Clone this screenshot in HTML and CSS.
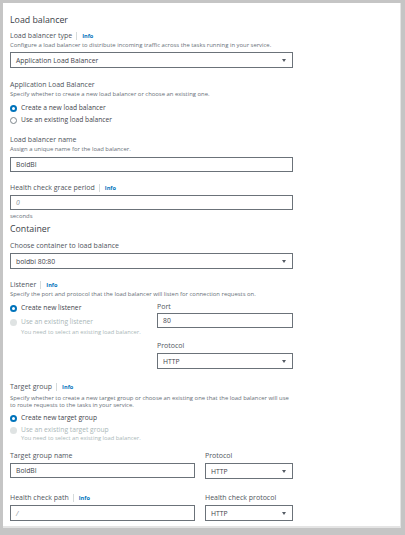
FILE: index.html
```html
<!DOCTYPE html>
<html lang="en">

<head>
    <meta charset="UTF-8">
    <meta name="viewport" content="width=device-width, initial-scale=1.0">
    <title>Load balancing</title>
    <link rel="stylesheet" href="styles.css">
</head>

<body>

    <div class="panel">
        <h2 class="title">Load balancer</h2>

        <div class="field first">
            <div class="label">Load balancer type <span class="info">Info</span></div>
            <div class="desc">Configure a load balancer to distribute incoming traffic across the tasks running in your service.</div>
            <div class="select">Application Load Balancer<span class="caret"></span></div>
        </div>

        <div class="field alb">
            <div class="label">Application Load Balancer</div>
            <div class="desc">Specify whether to create a new load balancer or choose an existing one.</div>
            <div class="radios">
                <div class="radio checked"><span class="dot"></span>Create a new load balancer</div>
                <div class="radio"><span class="dot"></span>Use an existing load balancer</div>
            </div>
        </div>

        <div class="field lb-name">
            <div class="label">Load balancer name</div>
            <div class="desc">Assign a unique name for the load balancer.</div>
            <div class="input">BoldBI</div>
        </div>

        <div class="field grace">
            <div class="label">Health check grace period <span class="info">Info</span></div>
            <div class="input placeholder">0</div>
            <div class="desc">seconds</div>
        </div>

        <h2 class="title container-title">Container</h2>

        <div class="field choose">
            <div class="label">Choose container to load balance</div>
            <div class="select">boldbi 80:80<span class="caret"></span></div>
        </div>

        <div class="field listener">
            <div class="label">Listener <span class="info">Info</span></div>
            <div class="desc">Specify the port and protocol that the load balancer will listen for connection requests on.</div>
            <div class="split">
                <div class="radios">
                    <div class="radio checked"><span class="dot"></span>Create new listener</div>
                    <div class="radio disabled"><span class="dot"></span>Use an existing listener</div>
                    <div class="hint">You need to select an existing load balancer.</div>
                </div>
                <div class="side">
                    <div class="label">Port</div>
                    <div class="input">80</div>
                    <div class="label proto">Protocol</div>
                    <div class="select">HTTP<span class="caret"></span></div>
                </div>
            </div>
        </div>

        <div class="field target">
            <div class="label">Target group <span class="info">Info</span></div>
            <div class="desc wrap">Specify whether to create a new target group or choose an existing one that the load balancer will use to route requests to the tasks in your service.</div>
            <div class="radios">
                <div class="radio checked"><span class="dot"></span>Create new target group</div>
                <div class="radio disabled"><span class="dot"></span>Use an existing target group</div>
                <div class="hint">You need to select an existing load balancer.</div>
            </div>
        </div>

        <div class="row tg-row">
            <div class="col wide">
                <div class="label">Target group name</div>
                <div class="input">BoldBI</div>
            </div>
            <div class="col narrow">
                <div class="label">Protocol</div>
                <div class="select">HTTP<span class="caret"></span></div>
            </div>
        </div>

        <div class="row hc-row">
            <div class="col wide">
                <div class="label">Health check path <span class="info">Info</span></div>
                <div class="input placeholder">/</div>
            </div>
            <div class="col narrow">
                <div class="label">Health check protocol</div>
                <div class="select">HTTP<span class="caret"></span></div>
            </div>
        </div>
    </div>

</body>

</html>
```

FILE: styles.css
```css
body {
    margin: 0;
    background: #c5c5c5;
    font-family: "Open Sans", "Noto Sans", sans-serif;
    color: #444b53;
}

.panel {
    margin: 3px 4px 0 3px;
    height: 525px;
    box-sizing: border-box;
    padding: 10px 7px 0 7px;
    background: #fff;
    border-right: 1px solid #e4e4e4;
    border-bottom: 2px solid #e4e4e4;
}

.title {
    margin: 0;
    font-size: 8.8px;
    font-weight: normal;
    line-height: 14px;
    color: #3b4148;
}

.label {
    font-size: 7px;
    line-height: 10px;
    color: #4f555c;
    display: flex;
    align-items: center;
}

.info {
    color: #0073bb;
    font-weight: bold;
    font-size: 5.6px;
    margin-left: 4px;
    padding-left: 5px;
    border-left: 1px solid #d5dbdb;
    line-height: 8px;
}

.desc {
    font-size: 5.9px;
    line-height: 8px;
    color: #687078;
}

.desc.wrap {
    width: 281px;
    line-height: 7px;
}

.select,
.input {
    width: 283px;
    box-sizing: border-box;
    border: 1px solid #6b7279;
    font-size: 6.8px;
    color: #3f454c;
    padding-left: 5px;
    display: flex;
    align-items: center;
}

.select {
    height: 16px;
    position: relative;
}

.input {
    height: 15px;
}

.placeholder {
    color: #8b949b;
    font-style: italic;
}

.caret {
    position: absolute;
    right: 6px;
    top: 6px;
    width: 0;
    height: 0;
    border-left: 2.5px solid transparent;
    border-right: 2.5px solid transparent;
    border-top: 3.5px solid #545b64;
}

.field.first {
    margin-top: 4px;
}

.field.first .select {
    margin-top: 3px;
}

.field.alb {
    margin-top: 12px;
}

.radios {
    display: flex;
    flex-direction: column;
    gap: 2px;
    margin-top: 5px;
}

.radio {
    font-size: 6.7px;
    line-height: 10px;
    color: #3f454c;
    display: flex;
    align-items: center;
}

.dot {
    width: 7px;
    height: 7px;
    box-sizing: border-box;
    border-radius: 50%;
    border: 1px solid #7d868c;
    margin-right: 4px;
    background: #fff;
}

.radio.checked .dot {
    border: 2.3px solid #0073bb;
}

.radio.disabled {
    color: #aab7b8;
}

.radio.disabled .dot {
    border: none;
    background: #dfe3e3;
}

.hint {
    font-size: 5.8px;
    line-height: 8px;
    color: #aab7b8;
    margin: -3px 0 0 11px;
}

.field.lb-name {
    margin-top: 10px;
}

.field.lb-name .input {
    margin-top: 4px;
}

.field.grace {
    margin-top: 11px;
}

.field.grace .input {
    margin-top: 2px;
    width: 283px;
}

.field.grace .desc {
    margin-top: 2px;
}

.container-title {
    margin-top: 2px;
}

.field.choose {
    margin-top: 5px;
}

.field.choose .select {
    margin-top: 2px;
}

.field.listener {
    margin-top: 11px;
}

.split {
    display: flex;
    gap: 10px;
    margin-top: 4px;
}

.split .radios {
    width: 137px;
    margin-top: 1px;
    gap: 4px;
}

.side {
    width: 136px;
}

.side .input,
.side .select {
    width: 136px;
    margin-top: 1px;
}

.side .label.proto {
    margin-top: 13px;
}

.side .select {
    margin-top: 2px;
}

.field.target {
    margin-top: 13px;
}

.field.target .desc {
    margin-top: 3px;
}

.field.target .radios {
    margin-top: 4px;
}

.row {
    display: flex;
    gap: 10px;
    width: 283px;
}

.row .wide {
    width: 185px;
}

.row .narrow {
    width: 88px;
}

.row .input,
.row .select {
    width: 100%;
    margin-top: 2px;
}

.tg-row {
    margin-top: 9px;
}

.hc-row {
    margin-top: 14px;
}

.hc-row .input,
.hc-row .select {
    height: 16px;
}
```
